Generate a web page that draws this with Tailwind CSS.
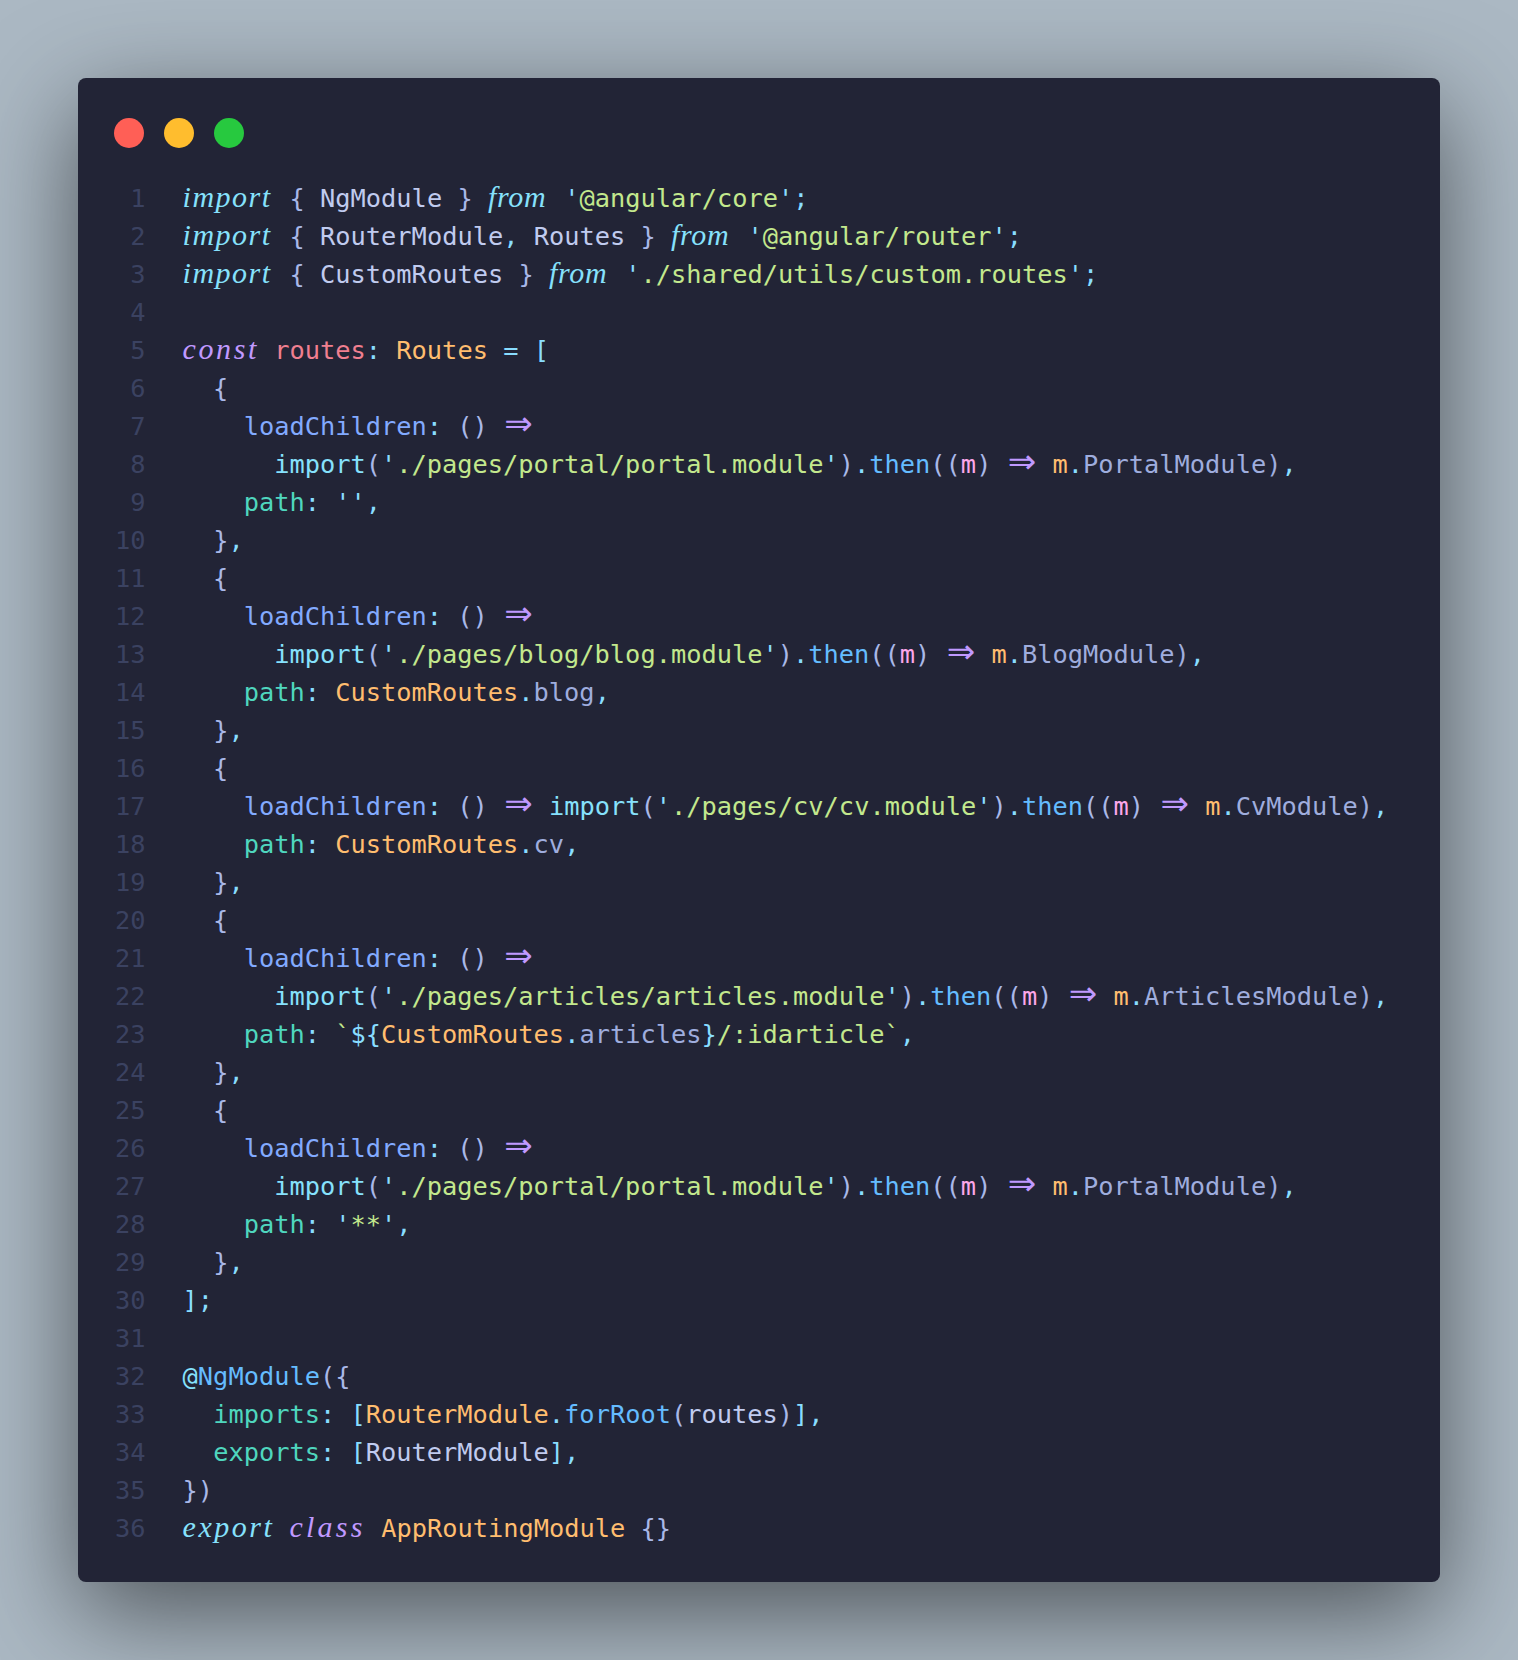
<!DOCTYPE html>
<html lang="en">
<head>
  <meta charset="UTF-8" />
  <title>app-routing.module.ts</title>
  <script src="https://cdn.jsdelivr.net/npm/@tailwindcss/browser@4"></script>
</head>
<body class="bg-[#abb8c3] h-[1660px] p-[78px] overflow-hidden">
  <div class="h-[1504px] rounded-lg bg-[#222436] shadow-[0_30px_102px_rgba(0,0,0,0.55)] pl-[37px] pt-[40px] font-['DejaVu_Sans_Mono',monospace] text-[25.35px] leading-[38px] text-[#c0cbef]">
    <!-- traffic lights -->
    <div class="flex gap-5 h-[61px] -ml-[1px]">
      <div class="w-[30px] h-[30px] rounded-full bg-[#ff5f56]"></div>
      <div class="w-[30px] h-[30px] rounded-full bg-[#ffbd2e]"></div>
      <div class="w-[30px] h-[30px] rounded-full bg-[#27c93f]"></div>
    </div>

    <div class="grid grid-cols-[30.6px_1fr] gap-x-[37px] auto-rows-[38px] whitespace-pre">
      <div class="text-right text-[#3b4261]">1</div><div><span class="inline-block w-[91.7px] font-['Liberation_Serif',serif] italic text-[30px] leading-[30px] tracking-[1.5px] text-[#86e1fc]">import</span> <span class="text-[#a9b8e8]">{</span> NgModule <span class="text-[#a9b8e8]">}</span> <span class="inline-block w-[61.1px] font-['Liberation_Serif',serif] italic text-[30px] leading-[30px] tracking-[0.7px] text-[#86e1fc]">from</span> <span class="text-[#89ddff]">'</span><span class="text-[#c3e88d]">@angular/core</span><span class="text-[#89ddff]">';</span></div>
      <div class="text-right text-[#3b4261]">2</div><div><span class="inline-block w-[91.7px] font-['Liberation_Serif',serif] italic text-[30px] leading-[30px] tracking-[1.5px] text-[#86e1fc]">import</span> <span class="text-[#a9b8e8]">{</span> RouterModule<span class="text-[#89ddff]">,</span> Routes <span class="text-[#a9b8e8]">}</span> <span class="inline-block w-[61.1px] font-['Liberation_Serif',serif] italic text-[30px] leading-[30px] tracking-[0.7px] text-[#86e1fc]">from</span> <span class="text-[#89ddff]">'</span><span class="text-[#c3e88d]">@angular/router</span><span class="text-[#89ddff]">';</span></div>
      <div class="text-right text-[#3b4261]">3</div><div><span class="inline-block w-[91.7px] font-['Liberation_Serif',serif] italic text-[30px] leading-[30px] tracking-[1.5px] text-[#86e1fc]">import</span> <span class="text-[#a9b8e8]">{</span> CustomRoutes <span class="text-[#a9b8e8]">}</span> <span class="inline-block w-[61.1px] font-['Liberation_Serif',serif] italic text-[30px] leading-[30px] tracking-[0.7px] text-[#86e1fc]">from</span> <span class="text-[#89ddff]">'</span><span class="text-[#c3e88d]">./shared/utils/custom.routes</span><span class="text-[#89ddff]">';</span></div>
      <div class="text-right text-[#3b4261]">4</div><div></div>
      <div class="text-right text-[#3b4261]">5</div><div><span class="inline-block w-[76.4px] font-['Liberation_Serif',serif] italic text-[30px] leading-[30px] tracking-[2.6px] text-[#c099ff]">const</span> <span class="text-[#f07f90]">routes</span><span class="text-[#89ddff]">:</span> <span class="text-[#ffbd6f]">Routes</span> <span class="text-[#89ddff]">= [</span></div>
      <div class="text-right text-[#3b4261]">6</div><div class="text-[#a9b8e8]">  {</div>
      <div class="text-right text-[#3b4261]">7</div><div>    <span class="text-[#82aaff]">loadChildren</span><span class="text-[#89ddff]">:</span> <span class="text-[#a9b8e8]">()</span> <span class="inline-block w-[30.6px] text-center font-['DejaVu_Sans',sans-serif] text-[34px] leading-[30px] text-[#c099ff]">⇒</span></div>
      <div class="text-right text-[#3b4261]">8</div><div>      <span class="text-[#86e1fc]">import</span><span class="text-[#a9b8e8]">(</span><span class="text-[#89ddff]">'</span><span class="text-[#c3e88d]">./pages/portal/portal.module</span><span class="text-[#89ddff]">'</span><span class="text-[#a9b8e8]">)</span><span class="text-[#89ddff]">.</span><span class="text-[#65bcff]">then</span><span class="text-[#a9b8e8]">((</span><span class="text-[#fca7ea]">m</span><span class="text-[#a9b8e8]">)</span> <span class="inline-block w-[30.6px] text-center font-['DejaVu_Sans',sans-serif] text-[34px] leading-[30px] text-[#c099ff]">⇒</span> <span class="text-[#ffbd6f]">m</span><span class="text-[#89ddff]">.</span><span class="text-[#9fadde]">PortalModule)</span><span class="text-[#89ddff]">,</span></div>
      <div class="text-right text-[#3b4261]">9</div><div>    <span class="text-[#4fd6be]">path</span><span class="text-[#89ddff]">:</span> <span class="text-[#89ddff]">'',</span></div>
      <div class="text-right text-[#3b4261]">10</div><div>  <span class="text-[#a9b8e8]">}</span><span class="text-[#89ddff]">,</span></div>
      <div class="text-right text-[#3b4261]">11</div><div class="text-[#a9b8e8]">  {</div>
      <div class="text-right text-[#3b4261]">12</div><div>    <span class="text-[#82aaff]">loadChildren</span><span class="text-[#89ddff]">:</span> <span class="text-[#a9b8e8]">()</span> <span class="inline-block w-[30.6px] text-center font-['DejaVu_Sans',sans-serif] text-[34px] leading-[30px] text-[#c099ff]">⇒</span></div>
      <div class="text-right text-[#3b4261]">13</div><div>      <span class="text-[#86e1fc]">import</span><span class="text-[#a9b8e8]">(</span><span class="text-[#89ddff]">'</span><span class="text-[#c3e88d]">./pages/blog/blog.module</span><span class="text-[#89ddff]">'</span><span class="text-[#a9b8e8]">)</span><span class="text-[#89ddff]">.</span><span class="text-[#65bcff]">then</span><span class="text-[#a9b8e8]">((</span><span class="text-[#fca7ea]">m</span><span class="text-[#a9b8e8]">)</span> <span class="inline-block w-[30.6px] text-center font-['DejaVu_Sans',sans-serif] text-[34px] leading-[30px] text-[#c099ff]">⇒</span> <span class="text-[#ffbd6f]">m</span><span class="text-[#89ddff]">.</span><span class="text-[#9fadde]">BlogModule)</span><span class="text-[#89ddff]">,</span></div>
      <div class="text-right text-[#3b4261]">14</div><div>    <span class="text-[#4fd6be]">path</span><span class="text-[#89ddff]">:</span> <span class="text-[#ffbd6f]">CustomRoutes</span><span class="text-[#89ddff]">.</span><span class="text-[#9fadde]">blog</span><span class="text-[#89ddff]">,</span></div>
      <div class="text-right text-[#3b4261]">15</div><div>  <span class="text-[#a9b8e8]">}</span><span class="text-[#89ddff]">,</span></div>
      <div class="text-right text-[#3b4261]">16</div><div class="text-[#a9b8e8]">  {</div>
      <div class="text-right text-[#3b4261]">17</div><div>    <span class="text-[#82aaff]">loadChildren</span><span class="text-[#89ddff]">:</span> <span class="text-[#a9b8e8]">()</span> <span class="inline-block w-[30.6px] text-center font-['DejaVu_Sans',sans-serif] text-[34px] leading-[30px] text-[#c099ff]">⇒</span> <span class="text-[#86e1fc]">import</span><span class="text-[#a9b8e8]">(</span><span class="text-[#89ddff]">'</span><span class="text-[#c3e88d]">./pages/cv/cv.module</span><span class="text-[#89ddff]">'</span><span class="text-[#a9b8e8]">)</span><span class="text-[#89ddff]">.</span><span class="text-[#65bcff]">then</span><span class="text-[#a9b8e8]">((</span><span class="text-[#fca7ea]">m</span><span class="text-[#a9b8e8]">)</span> <span class="inline-block w-[30.6px] text-center font-['DejaVu_Sans',sans-serif] text-[34px] leading-[30px] text-[#c099ff]">⇒</span> <span class="text-[#ffbd6f]">m</span><span class="text-[#89ddff]">.</span><span class="text-[#9fadde]">CvModule)</span><span class="text-[#89ddff]">,</span></div>
      <div class="text-right text-[#3b4261]">18</div><div>    <span class="text-[#4fd6be]">path</span><span class="text-[#89ddff]">:</span> <span class="text-[#ffbd6f]">CustomRoutes</span><span class="text-[#89ddff]">.</span><span class="text-[#9fadde]">cv</span><span class="text-[#89ddff]">,</span></div>
      <div class="text-right text-[#3b4261]">19</div><div>  <span class="text-[#a9b8e8]">}</span><span class="text-[#89ddff]">,</span></div>
      <div class="text-right text-[#3b4261]">20</div><div class="text-[#a9b8e8]">  {</div>
      <div class="text-right text-[#3b4261]">21</div><div>    <span class="text-[#82aaff]">loadChildren</span><span class="text-[#89ddff]">:</span> <span class="text-[#a9b8e8]">()</span> <span class="inline-block w-[30.6px] text-center font-['DejaVu_Sans',sans-serif] text-[34px] leading-[30px] text-[#c099ff]">⇒</span></div>
      <div class="text-right text-[#3b4261]">22</div><div>      <span class="text-[#86e1fc]">import</span><span class="text-[#a9b8e8]">(</span><span class="text-[#89ddff]">'</span><span class="text-[#c3e88d]">./pages/articles/articles.module</span><span class="text-[#89ddff]">'</span><span class="text-[#a9b8e8]">)</span><span class="text-[#89ddff]">.</span><span class="text-[#65bcff]">then</span><span class="text-[#a9b8e8]">((</span><span class="text-[#fca7ea]">m</span><span class="text-[#a9b8e8]">)</span> <span class="inline-block w-[30.6px] text-center font-['DejaVu_Sans',sans-serif] text-[34px] leading-[30px] text-[#c099ff]">⇒</span> <span class="text-[#ffbd6f]">m</span><span class="text-[#89ddff]">.</span><span class="text-[#9fadde]">ArticlesModule)</span><span class="text-[#89ddff]">,</span></div>
      <div class="text-right text-[#3b4261]">23</div><div>    <span class="text-[#4fd6be]">path</span><span class="text-[#89ddff]">:</span> <span class="text-[#c3e88d]">`</span><span class="text-[#89ddff]">${</span><span class="text-[#ffbd6f]">CustomRoutes</span><span class="text-[#89ddff]">.</span><span class="text-[#9fadde]">articles</span><span class="text-[#89ddff]">}</span><span class="text-[#c3e88d]">/:idarticle`</span><span class="text-[#89ddff]">,</span></div>
      <div class="text-right text-[#3b4261]">24</div><div>  <span class="text-[#a9b8e8]">}</span><span class="text-[#89ddff]">,</span></div>
      <div class="text-right text-[#3b4261]">25</div><div class="text-[#a9b8e8]">  {</div>
      <div class="text-right text-[#3b4261]">26</div><div>    <span class="text-[#82aaff]">loadChildren</span><span class="text-[#89ddff]">:</span> <span class="text-[#a9b8e8]">()</span> <span class="inline-block w-[30.6px] text-center font-['DejaVu_Sans',sans-serif] text-[34px] leading-[30px] text-[#c099ff]">⇒</span></div>
      <div class="text-right text-[#3b4261]">27</div><div>      <span class="text-[#86e1fc]">import</span><span class="text-[#a9b8e8]">(</span><span class="text-[#89ddff]">'</span><span class="text-[#c3e88d]">./pages/portal/portal.module</span><span class="text-[#89ddff]">'</span><span class="text-[#a9b8e8]">)</span><span class="text-[#89ddff]">.</span><span class="text-[#65bcff]">then</span><span class="text-[#a9b8e8]">((</span><span class="text-[#fca7ea]">m</span><span class="text-[#a9b8e8]">)</span> <span class="inline-block w-[30.6px] text-center font-['DejaVu_Sans',sans-serif] text-[34px] leading-[30px] text-[#c099ff]">⇒</span> <span class="text-[#ffbd6f]">m</span><span class="text-[#89ddff]">.</span><span class="text-[#9fadde]">PortalModule)</span><span class="text-[#89ddff]">,</span></div>
      <div class="text-right text-[#3b4261]">28</div><div>    <span class="text-[#4fd6be]">path</span><span class="text-[#89ddff]">:</span> <span class="text-[#89ddff]">'</span><span class="text-[#c3e88d]">**</span><span class="text-[#89ddff]">',</span></div>
      <div class="text-right text-[#3b4261]">29</div><div>  <span class="text-[#a9b8e8]">}</span><span class="text-[#89ddff]">,</span></div>
      <div class="text-right text-[#3b4261]">30</div><div class="text-[#89ddff]">];</div>
      <div class="text-right text-[#3b4261]">31</div><div></div>
      <div class="text-right text-[#3b4261]">32</div><div><span class="text-[#86e1fc]">@</span><span class="text-[#65bcff]">NgModule</span><span class="text-[#a9b8e8]">({</span></div>
      <div class="text-right text-[#3b4261]">33</div><div>  <span class="text-[#4fd6be]">imports</span><span class="text-[#89ddff]">:</span> <span class="text-[#89ddff]">[</span><span class="text-[#ffbd6f]">RouterModule</span><span class="text-[#89ddff]">.</span><span class="text-[#65bcff]">forRoot</span><span class="text-[#a9b8e8]">(</span>routes<span class="text-[#a9b8e8]">)</span><span class="text-[#89ddff]">],</span></div>
      <div class="text-right text-[#3b4261]">34</div><div>  <span class="text-[#4fd6be]">exports</span><span class="text-[#89ddff]">:</span> <span class="text-[#89ddff]">[</span>RouterModule<span class="text-[#89ddff]">],</span></div>
      <div class="text-right text-[#3b4261]">35</div><div class="text-[#a9b8e8]">})</div>
      <div class="text-right text-[#3b4261]">36</div><div><span class="inline-block w-[91.7px] font-['Liberation_Serif',serif] italic text-[30px] leading-[30px] tracking-[2.5px] text-[#86e1fc]">export</span> <span class="inline-block w-[76.4px] font-['Liberation_Serif',serif] italic text-[30px] leading-[30px] tracking-[3.2px] text-[#c099ff]">class</span> <span class="text-[#ffbd6f]">AppRoutingModule</span> <span class="text-[#a9b8e8]">{}</span></div>
    </div>
  </div>
</body>
</html>
